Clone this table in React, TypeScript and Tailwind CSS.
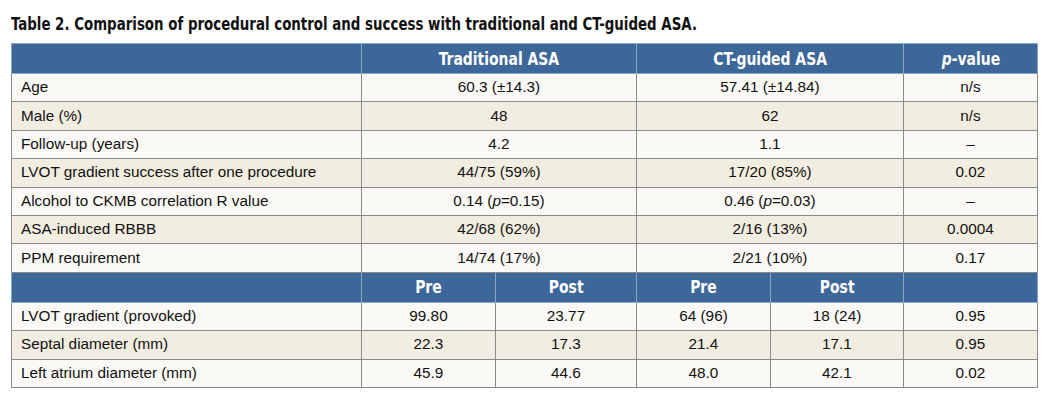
import React from "react";

type Row = { label: React.ReactNode; cells: React.ReactNode[]; shade: boolean };

const topRows: Row[] = [
  { label: "Age", cells: ["60.3 (±14.3)", "57.41 (±14.84)", "n/s"], shade: false },
  { label: "Male (%)", cells: ["48", "62", "n/s"], shade: true },
  { label: "Follow-up (years)", cells: ["4.2", "1.1", "–"], shade: false },
  { label: "LVOT gradient success after one procedure", cells: ["44/75 (59%)", "17/20 (85%)", "0.02"], shade: true },
  {
    label: "Alcohol to CKMB correlation R value",
    cells: [
      <>0.14 (<i>p</i>=0.15)</>,
      <>0.46 (<i>p</i>=0.03)</>,
      "–",
    ],
    shade: false,
  },
  { label: "ASA-induced RBBB", cells: ["42/68 (62%)", "2/16 (13%)", "0.0004"], shade: true },
  { label: "PPM requirement", cells: ["14/74 (17%)", "2/21 (10%)", "0.17"], shade: false },
];

const bottomRows: Row[] = [
  { label: "LVOT gradient (provoked)", cells: ["99.80", "23.77", "64 (96)", "18 (24)", "0.95"], shade: false },
  { label: "Septal diameter (mm)", cells: ["22.3", "17.3", "21.4", "17.1", "0.95"], shade: true },
  { label: "Left atrium diameter (mm)", cells: ["45.9", "44.6", "48.0", "42.1", "0.02"], shade: false },
];

const condensed = { fontFamily: '"DejaVu Sans Condensed", "DejaVu Sans", sans-serif' };

const head = "bg-[#3d6699] text-white font-bold text-[18px] border border-[#8aa6c9] h-[30px] text-center";
const cell = "border border-[#8a8a8a] h-[28.4px] text-center";

function HeadText({ children }: { children?: React.ReactNode }) {
  return (
    <span className="inline-block scale-x-[0.86]" style={condensed}>
      {children}
    </span>
  );
}

export default function App() {
  return (
    <div className="w-[1061px] h-[402px] bg-white pl-[11px] pt-[14px] text-[#111]">
      <h1
        className="text-[18px] font-bold leading-[20px] mb-[9px] whitespace-nowrap scale-x-[0.826] origin-left"
        style={condensed}
      >
        Table 2. Comparison of procedural control and success with traditional and CT-guided ASA.
      </h1>
      <table
        className="border-collapse w-[1026px] text-[15.3px] table-fixed border border-[#8a8a8a]"
        style={{ fontFamily: '"Liberation Sans", Arial, sans-serif' }}
      >
        <colgroup>
          <col className="w-[350px]" />
          <col className="w-[134px]" />
          <col className="w-[141px]" />
          <col className="w-[134px]" />
          <col className="w-[133px]" />
          <col className="w-[134px]" />
        </colgroup>
        <tbody>
          <tr>
            <th className={head}></th>
            <th colSpan={2} className={head}>
              <HeadText>Traditional ASA</HeadText>
            </th>
            <th colSpan={2} className={head}>
              <HeadText>CT-guided ASA</HeadText>
            </th>
            <th className={head}>
              <HeadText>
                <i>p</i>-value
              </HeadText>
            </th>
          </tr>
          {topRows.map((r, i) => {
            const edge = i === 6 ? " border-t-[#222]" : "";
            return (
              <tr key={i} className={r.shade ? "bg-[#f1ede0]" : "bg-[#faf9f5]"}>
                <td className={`${cell}${edge} text-left pl-[9px]`}>{r.label}</td>
                <td colSpan={2} className={`${cell}${edge}`}>{r.cells[0]}</td>
                <td colSpan={2} className={`${cell}${edge}`}>{r.cells[1]}</td>
                <td className={`${cell}${edge}`}>{r.cells[2]}</td>
              </tr>
            );
          })}
          <tr>
            <th className={head}></th>
            {["Pre", "Post", "Pre", "Post", ""].map((h, i) => (
              <th key={i} className={head}>
                <HeadText>{h}</HeadText>
              </th>
            ))}
          </tr>
          {bottomRows.map((r, i) => (
            <tr key={i} className={r.shade ? "bg-[#f1ede0]" : "bg-[#faf9f5]"}>
              <td className={`${cell} text-left pl-[9px]`}>{r.label}</td>
              {r.cells.map((c, j) => (
                <td key={j} className={cell}>{c}</td>
              ))}
            </tr>
          ))}
        </tbody>
      </table>
    </div>
  );
}
